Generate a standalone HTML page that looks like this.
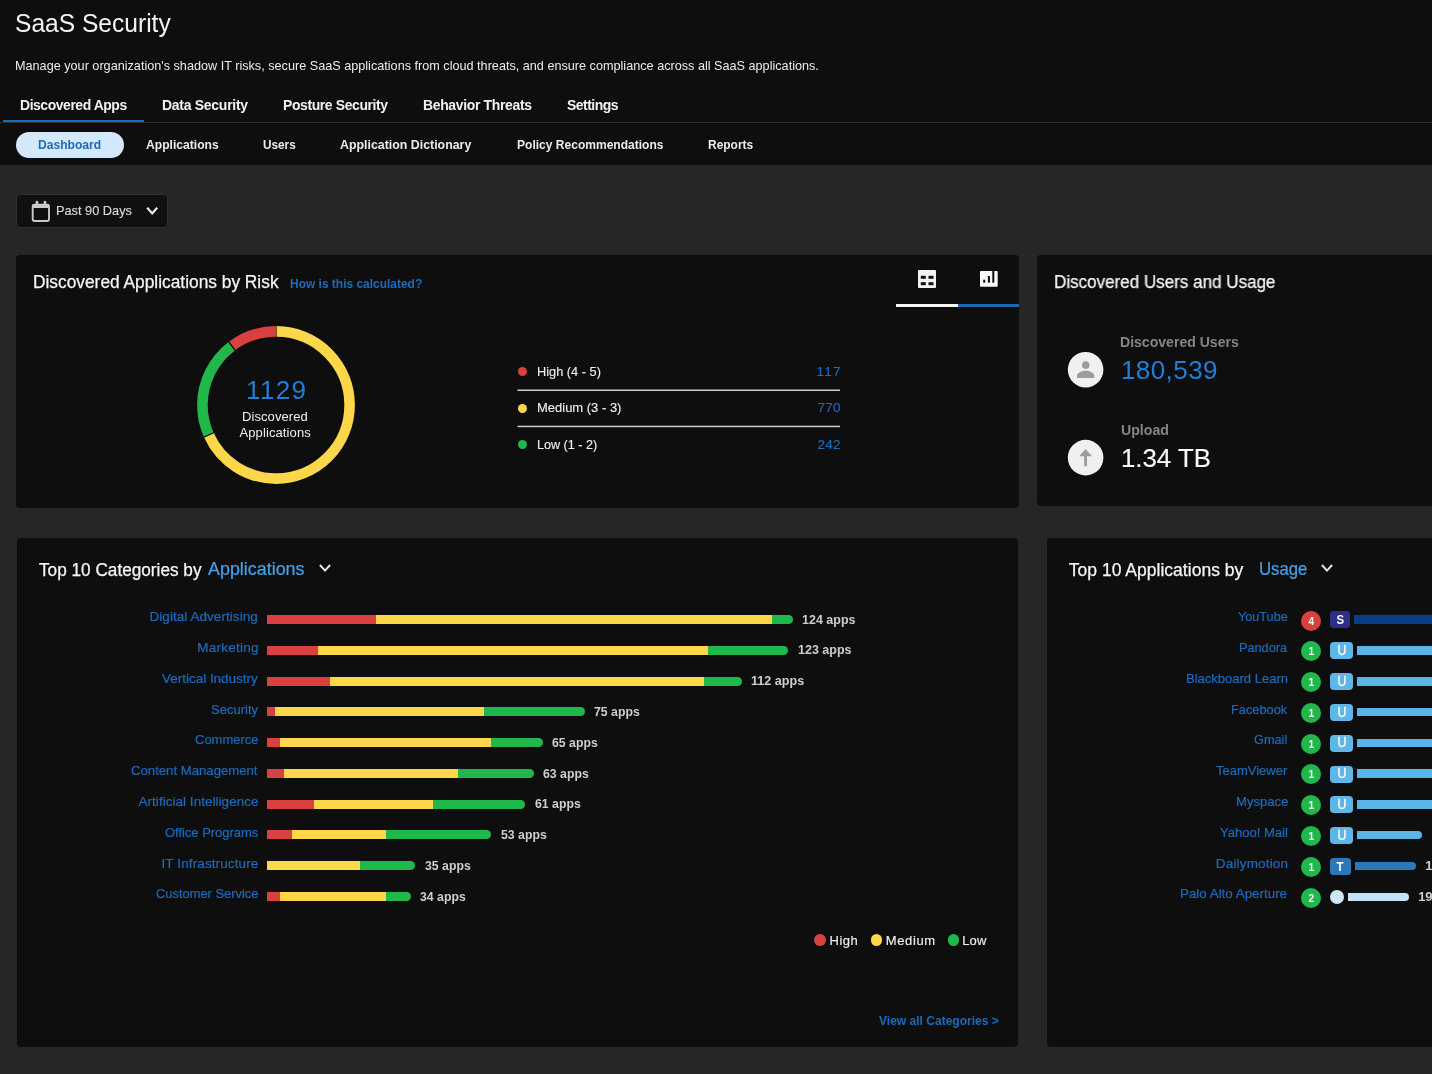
<!DOCTYPE html>
<html lang="en">
<head>
<meta charset="utf-8">
<title>SaaS Security</title>
<style>
html,body{margin:0;padding:0;}
body{width:1432px;height:1074px;overflow:hidden;background:#262626;font-family:"Liberation Sans",sans-serif;position:relative;}
#tx{position:absolute;left:0;top:0;width:1432px;height:1074px;overflow:hidden;will-change:transform;}
.a{position:absolute;}
.t{position:absolute;white-space:nowrap;margin:0;font-weight:400;text-decoration:none;}
.hdr{left:0;top:0;width:1432px;height:165px;background:#0e0e0e;}
.card{background:#0e0e0e;border-radius:4px;}
.seg{position:absolute;top:0;height:100%;}
.bar{position:absolute;height:9px;border-radius:0 4.5px 4.5px 0;overflow:hidden;}
.r{background:#d94141;}.y{background:#fdd749;}.g{background:#21b84b;}
.dot{position:absolute;border-radius:50%;}
.rc{position:absolute;width:20px;height:20px;border-radius:50%;color:#fff;font-size:11.5px;font-weight:700;line-height:20.6px;text-align:center;}
.sq{display:inline-block;transform:scaleX(.88);}
.bd{position:absolute;border-radius:3.5px;color:#fff;font-size:13px;font-weight:700;text-align:center;}
.ub{position:absolute;height:8.5px;border-radius:0 4.5px 4.5px 0;}
</style>
</head>
<body>
<div id="tx">

<header>
<div class="a hdr"></div>
<h1 class="t" style="left:15.05px;top:5.49px;font-size:26px;line-height:36px;color:#f4f4f4;transform:scaleX(0.9451);transform-origin:left center">SaaS Security</h1>
<p class="t" style="left:15.03px;top:56.50px;font-size:13px;line-height:18px;color:#ececec;transform:scaleX(0.9732);transform-origin:left center">Manage your organization's shadow IT risks, secure SaaS applications from cloud threats, and ensure compliance across all SaaS applications.</p>
<nav aria-label="Sections">
<div class="a" style="left:0;top:122px;width:1432px;height:1px;background:#2e2e2e"></div>
<div class="a" style="left:3px;top:120px;width:141px;height:2px;background:#1a69ba"></div>
<a class="t" href="#" style="left:19.60px;top:93.63px;font-size:15.5px;line-height:22px;color:#f2f2f2;letter-spacing:-0.496px;transform:scaleX(0.9000);transform-origin:left center;font-weight:700">Discovered Apps</a>
<a class="t" href="#" style="left:161.60px;top:93.63px;font-size:15.5px;line-height:22px;color:#f2f2f2;letter-spacing:-0.287px;transform:scaleX(0.9000);transform-origin:left center;font-weight:700">Data Security</a>
<a class="t" href="#" style="left:282.85px;top:93.63px;font-size:15.5px;line-height:22px;color:#f2f2f2;letter-spacing:-0.430px;transform:scaleX(0.9000);transform-origin:left center;font-weight:700">Posture Security</a>
<a class="t" href="#" style="left:423.35px;top:93.63px;font-size:15.5px;line-height:22px;color:#f2f2f2;letter-spacing:-0.371px;transform:scaleX(0.9000);transform-origin:left center;font-weight:700">Behavior Threats</a>
<a class="t" href="#" style="left:567.00px;top:93.63px;font-size:15.5px;line-height:22px;color:#f2f2f2;letter-spacing:-0.551px;transform:scaleX(0.9000);transform-origin:left center;font-weight:700">Settings</a>
</nav>
<nav aria-label="Discovered Apps">
<div class="a" style="left:15.5px;top:132px;width:108px;height:25.5px;border-radius:13px;background:#d3e8fa"></div>
<a class="t" href="#" style="left:38.00px;top:136.00px;font-size:13px;line-height:18px;color:#1c6bbe;transform:scaleX(0.9307);transform-origin:left center;font-weight:700">Dashboard</a>
<a class="t" href="#" style="left:145.75px;top:135.75px;font-size:13px;line-height:18px;color:#ececec;transform:scaleX(0.9322);transform-origin:left center;font-weight:700">Applications</a>
<a class="t" href="#" style="left:263.00px;top:135.75px;font-size:13px;line-height:18px;color:#ececec;transform:scaleX(0.9051);transform-origin:left center;font-weight:700">Users</a>
<a class="t" href="#" style="left:340.00px;top:135.75px;font-size:13px;line-height:18px;color:#ececec;transform:scaleX(0.9515);transform-origin:left center;font-weight:700">Application Dictionary</a>
<a class="t" href="#" style="left:517.00px;top:135.75px;font-size:13px;line-height:18px;color:#ececec;transform:scaleX(0.9258);transform-origin:left center;font-weight:700">Policy Recommendations</a>
<a class="t" href="#" style="left:708.25px;top:135.75px;font-size:13px;line-height:18px;color:#ececec;transform:scaleX(0.9205);transform-origin:left center;font-weight:700">Reports</a>
</nav>
</header>

<main>
<!-- time range picker -->
<div class="filter">
<div class="a" style="left:16px;top:194px;width:150px;height:32px;border:1px solid #303030;border-radius:4px;background:#101010"></div>
<svg class="a" style="left:30px;top:199px" width="22" height="25" viewBox="0 0 22 25">
 <rect x="2.7" y="5.8" width="16.3" height="16.2" rx="2" fill="none" stroke="#cacaca" stroke-width="1.9"/>
 <rect x="2.7" y="5" width="16.3" height="4" fill="#cacaca"/>
 <rect x="5.7" y="1.9" width="2.5" height="4" fill="#cacaca"/><rect x="13.7" y="1.9" width="2.5" height="4" fill="#cacaca"/>
</svg>
<span class="t" style="left:55.72px;top:201.90px;font-size:13px;line-height:18px;color:#d8d8d8;transform:scaleX(0.9816);transform-origin:left center;-webkit-text-stroke:0.15px #d8d8d8">Past 90 Days</span>
<svg class="a" style="left:144px;top:204px" width="16" height="14" viewBox="0 0 16 14"><path d="M3.2 3.8 L8.2 9.4 L13.2 3.8" fill="none" stroke="#ececec" stroke-width="2.2"/></svg>
</div>

<!-- card 1: discovered applications by risk -->
<section aria-label="Discovered Applications by Risk">
<div class="a card" style="left:16px;top:255px;width:1003px;height:252.5px"></div>
<svg class="a" style="left:918px;top:270px" width="18" height="18" viewBox="0 0 18 18"><rect width="18" height="18" rx="1" fill="#f2f2f2"/><g fill="#0e0e0e"><rect x="2.8" y="5.8" width="5" height="3"/><rect x="10.5" y="5.8" width="5" height="3"/><rect x="2.8" y="12.2" width="5" height="3"/><rect x="10.5" y="12.2" width="5" height="3"/></g></svg>
<svg class="a" style="left:979.8px;top:271.3px" width="18" height="16" viewBox="0 0 18 16"><rect width="17.7" height="15.8" rx="0.8" fill="#fafafa"/><g fill="#0e0e0e"><rect x="3.2" y="8.7" width="2" height="3"/><rect x="7.9" y="5" width="2" height="6.7"/><rect x="12.3" y="0" width="2" height="11.7"/></g></svg>
<div class="a" style="left:896px;top:304px;width:62px;height:3px;background:#f4f4f4"></div>
<div class="a" style="left:958px;top:304px;width:61px;height:3px;background:#1a69ba"></div>
<svg class="a" style="left:189.75px;top:318.75px" width="172" height="172" viewBox="-86 -86 172 172">
 <g fill="none" stroke-width="10.6" transform="rotate(-90)">
  <circle r="73.6" stroke="#fdd749" stroke-dasharray="314.09 462.44" stroke-dashoffset="-0.65"/>
  <circle r="73.6" stroke="#21b84b" stroke-dasharray="97.82 462.44" stroke-dashoffset="-316.04"/>
  <circle r="73.6" stroke="#d94141" stroke-dasharray="46.62 462.44" stroke-dashoffset="-415.17"/>
 </g>
</svg>
<div class="dot r" style="left:517.5px;top:367.2px;width:9px;height:9px"></div>
<div class="dot y" style="left:517.5px;top:403.5px;width:9px;height:9px"></div>
<div class="dot g" style="left:517.5px;top:440px;width:9px;height:9px"></div>
<svg class="a" style="left:517px;top:385px" width="324" height="46" viewBox="0 0 324 46"><rect x="0.5" y="4.5" width="322.5" height="1.5" fill="#cdcdcd"/><rect x="0.5" y="40.7" width="322.5" height="1.5" fill="#cdcdcd"/></svg>
<h2 class="t" style="left:33.01px;top:269.84px;font-size:17.5px;line-height:24px;color:#f6f6f6;transform:scaleX(0.9900);transform-origin:left center;-webkit-text-stroke:0.25px #f6f6f6">Discovered Applications by Risk</h2>
<a class="t" href="#" style="left:289.50px;top:274.50px;font-size:13px;line-height:18px;color:#1c6bbe;transform:scaleX(0.9196);transform-origin:left center;font-weight:700">How is this calculated?</a>
<span class="t" style="left:246.00px;top:372.24px;font-size:26px;line-height:36px;color:#1f7fd8;letter-spacing:1.350px">1129</span>
<span class="t" style="left:242.00px;top:408.00px;font-size:13px;line-height:18px;color:#f0f0f0;letter-spacing:0.078px">Discovered</span>
<span class="t" style="left:239.50px;top:424.00px;font-size:13px;line-height:18px;color:#f0f0f0;letter-spacing:0.105px">Applications</span>
<span class="t" style="left:536.55px;top:362.07px;font-size:13.5px;line-height:19px;color:#f0f0f0;transform:scaleX(0.9466);transform-origin:left center;-webkit-text-stroke:0.12px #f0f0f0">High (4 - 5)</span>
<a class="t" href="#" style="left:816.50px;top:362.07px;font-size:13.5px;line-height:19px;color:#1c6bbe;letter-spacing:1.243px;-webkit-text-stroke:0.15px #1c6bbe">117</a>
<span class="t" style="left:536.54px;top:398.32px;font-size:13.5px;line-height:19px;color:#f0f0f0;transform:scaleX(0.9620);transform-origin:left center;-webkit-text-stroke:0.12px #f0f0f0">Medium (3 - 3)</span>
<a class="t" href="#" style="left:817.50px;top:398.32px;font-size:13.5px;line-height:19px;color:#1c6bbe;letter-spacing:0.242px;-webkit-text-stroke:0.15px #1c6bbe">770</a>
<span class="t" style="left:536.57px;top:434.57px;font-size:13.5px;line-height:19px;color:#f0f0f0;transform:scaleX(0.9322);transform-origin:left center;-webkit-text-stroke:0.12px #f0f0f0">Low (1 - 2)</span>
<a class="t" href="#" style="left:817.50px;top:434.57px;font-size:13.5px;line-height:19px;color:#1c6bbe;letter-spacing:0.242px;-webkit-text-stroke:0.15px #1c6bbe">242</a>
</section>

<!-- card 2: discovered users and usage -->
<section aria-label="Discovered Users and Usage">
<div class="a card" style="left:1037px;top:255px;width:420px;height:250.5px"></div>
<svg class="a" style="left:1067px;top:351px" width="38" height="38" viewBox="0 0 38 38"><circle cx="18.6" cy="18.7" r="17.8" fill="#f0f0f0"/><circle cx="18.75" cy="14.1" r="3.8" fill="#9c9c9c"/><path d="M10 27 v-2.2 c0-3 4.5-5.1 8.7-5.1 s8.6 2.1 8.6 5.1 v2.2 z" fill="#9c9c9c"/></svg>
<svg class="a" style="left:1067px;top:439px" width="38" height="38" viewBox="0 0 38 38"><circle cx="18.6" cy="18.6" r="17.8" fill="#f0f0f0"/><path d="M18.6 10 L25.1 17.3 H20 V27.3 H17.2 V17.3 H12.1 Z" fill="#9c9c9c"/></svg>
<h2 class="t" style="left:1053.53px;top:269.84px;font-size:17.5px;line-height:24px;color:#f6f6f6;transform:scaleX(0.9729);transform-origin:left center;-webkit-text-stroke:0.25px #f6f6f6">Discovered Users and Usage</h2>
<span class="t" style="left:1119.56px;top:330.55px;font-size:15px;line-height:21px;color:#858585;transform:scaleX(0.9370);transform-origin:left center;font-weight:700">Discovered Users</span>
<a class="t" href="#" style="left:1121.00px;top:352.24px;font-size:26px;line-height:36px;color:#1f7fd8;letter-spacing:0.413px">180,539</a>
<span class="t" style="left:1120.50px;top:418.80px;font-size:15px;line-height:21px;color:#858585;transform:scaleX(0.9424);transform-origin:left center;font-weight:700">Upload</span>
<span class="t" style="left:1121.01px;top:439.99px;font-size:26px;line-height:36px;color:#fafafa;transform:scaleX(0.9920);transform-origin:left center;-webkit-text-stroke:0.15px #fafafa">1.34 TB</span>
</section>

<!-- card 3: top 10 categories -->
<section aria-label="Top 10 Categories">
<div class="a card" style="left:17px;top:538px;width:1001px;height:509px"></div>
<svg class="a" style="left:317px;top:561px" width="16" height="14" viewBox="0 0 16 14"><path d="M2.9 4 L8 9.6 L13.1 4" fill="none" stroke="#e4e4e4" stroke-width="2"/></svg>
<div class="bar" style="left:266.5px;top:615.00px;width:526.50px"><div class="seg r" style="left:0;width:109.75px"></div><div class="seg y" style="left:109.75px;width:395.75px"></div><div class="seg g" style="left:505.50px;width:21.00px"></div></div>
<div class="bar" style="left:266.5px;top:645.78px;width:521.75px"><div class="seg r" style="left:0;width:51.50px"></div><div class="seg y" style="left:51.50px;width:390.00px"></div><div class="seg g" style="left:441.50px;width:80.25px"></div></div>
<div class="bar" style="left:266.5px;top:676.56px;width:475.50px"><div class="seg r" style="left:0;width:63.50px"></div><div class="seg y" style="left:63.50px;width:373.75px"></div><div class="seg g" style="left:437.25px;width:38.25px"></div></div>
<div class="bar" style="left:266.5px;top:707.34px;width:318.25px"><div class="seg r" style="left:0;width:8.50px"></div><div class="seg y" style="left:8.50px;width:208.50px"></div><div class="seg g" style="left:217.00px;width:101.25px"></div></div>
<div class="bar" style="left:266.5px;top:738.12px;width:276.50px"><div class="seg r" style="left:0;width:13.00px"></div><div class="seg y" style="left:13.00px;width:211.75px"></div><div class="seg g" style="left:224.75px;width:51.75px"></div></div>
<div class="bar" style="left:266.5px;top:768.90px;width:267.50px"><div class="seg r" style="left:0;width:17.50px"></div><div class="seg y" style="left:17.50px;width:174.00px"></div><div class="seg g" style="left:191.50px;width:76.00px"></div></div>
<div class="bar" style="left:266.5px;top:799.68px;width:258.50px"><div class="seg r" style="left:0;width:47.00px"></div><div class="seg y" style="left:47.00px;width:119.00px"></div><div class="seg g" style="left:166.00px;width:92.50px"></div></div>
<div class="bar" style="left:266.5px;top:830.46px;width:224.50px"><div class="seg r" style="left:0;width:25.50px"></div><div class="seg y" style="left:25.50px;width:93.50px"></div><div class="seg g" style="left:119.00px;width:105.50px"></div></div>
<div class="bar" style="left:266.5px;top:861.24px;width:148.50px"><div class="seg y" style="left:0.00px;width:93.50px"></div><div class="seg g" style="left:93.50px;width:55.00px"></div></div>
<div class="bar" style="left:266.5px;top:892.02px;width:144.00px"><div class="seg r" style="left:0;width:13.00px"></div><div class="seg y" style="left:13.00px;width:106.00px"></div><div class="seg g" style="left:119.00px;width:25.00px"></div></div>
<div class="dot r" style="left:814.3px;top:933.9px;width:11.9px;height:11.9px"></div>
<div class="dot y" style="left:870.5px;top:933.9px;width:11.9px;height:11.9px"></div>
<div class="dot g" style="left:947.5px;top:933.9px;width:11.9px;height:11.9px"></div>
<h2 class="t" style="left:39.25px;top:557.54px;font-size:17.5px;line-height:24px;color:#f6f6f6;transform:scaleX(0.9826);transform-origin:left center;-webkit-text-stroke:0.25px #f6f6f6">Top 10 Categories by</h2>
<span class="t" style="left:208.00px;top:555.99px;font-size:18.5px;line-height:26px;color:#44a2ee;transform:scaleX(0.9673);transform-origin:left center;-webkit-text-stroke:0.2px #44a2ee">Applications</span>
<a class="t" href="#" style="left:149.50px;top:607.32px;font-size:13.5px;line-height:19px;color:#1c6bbe;letter-spacing:0.053px;-webkit-text-stroke:0.2px #1c6bbe">Digital Advertising</a>
<span class="t" style="left:801.75px;top:610.70px;font-size:13px;line-height:18px;color:#cecece;transform:scaleX(0.9610);transform-origin:left center;font-weight:700">124 apps</span>
<a class="t" href="#" style="left:197.25px;top:638.10px;font-size:13.5px;line-height:19px;color:#1c6bbe;letter-spacing:0.248px;-webkit-text-stroke:0.2px #1c6bbe">Marketing</a>
<span class="t" style="left:797.50px;top:641.48px;font-size:13px;line-height:18px;color:#cecece;transform:scaleX(0.9610);transform-origin:left center;font-weight:700">123 apps</span>
<a class="t" href="#" style="left:162.00px;top:668.88px;font-size:13.5px;line-height:19px;color:#1c6bbe;transform:scaleX(0.9970);transform-origin:left center;-webkit-text-stroke:0.2px #1c6bbe">Vertical Industry</a>
<span class="t" style="left:751.25px;top:672.26px;font-size:13px;line-height:18px;color:#cecece;transform:scaleX(0.9690);transform-origin:left center;font-weight:700">112 apps</span>
<a class="t" href="#" style="left:210.75px;top:699.66px;font-size:13.5px;line-height:19px;color:#1c6bbe;transform:scaleX(0.9640);transform-origin:left center;-webkit-text-stroke:0.2px #1c6bbe">Security</a>
<span class="t" style="left:594.25px;top:703.04px;font-size:13px;line-height:18px;color:#cecece;transform:scaleX(0.9443);transform-origin:left center;font-weight:700">75 apps</span>
<a class="t" href="#" style="left:195.00px;top:730.44px;font-size:13.5px;line-height:19px;color:#1c6bbe;transform:scaleX(0.9618);transform-origin:left center;-webkit-text-stroke:0.2px #1c6bbe">Commerce</a>
<span class="t" style="left:551.75px;top:733.82px;font-size:13px;line-height:18px;color:#cecece;transform:scaleX(0.9443);transform-origin:left center;font-weight:700">65 apps</span>
<a class="t" href="#" style="left:131.25px;top:761.22px;font-size:13.5px;line-height:19px;color:#1c6bbe;transform:scaleX(0.9744);transform-origin:left center;-webkit-text-stroke:0.2px #1c6bbe">Content Management</a>
<span class="t" style="left:543.00px;top:764.60px;font-size:13px;line-height:18px;color:#cecece;transform:scaleX(0.9443);transform-origin:left center;font-weight:700">63 apps</span>
<a class="t" href="#" style="left:138.50px;top:792.00px;font-size:13.5px;line-height:19px;color:#1c6bbe;letter-spacing:0.032px;-webkit-text-stroke:0.2px #1c6bbe">Artificial Intelligence</a>
<span class="t" style="left:534.75px;top:795.38px;font-size:13px;line-height:18px;color:#cecece;transform:scaleX(0.9443);transform-origin:left center;font-weight:700">61 apps</span>
<a class="t" href="#" style="left:164.50px;top:822.78px;font-size:13.5px;line-height:19px;color:#1c6bbe;transform:scaleX(0.9587);transform-origin:left center;-webkit-text-stroke:0.2px #1c6bbe">Office Programs</a>
<span class="t" style="left:501.00px;top:826.16px;font-size:13px;line-height:18px;color:#cecece;transform:scaleX(0.9443);transform-origin:left center;font-weight:700">53 apps</span>
<a class="t" href="#" style="left:161.50px;top:853.56px;font-size:13.5px;line-height:19px;color:#1c6bbe;letter-spacing:0.108px;-webkit-text-stroke:0.2px #1c6bbe">IT Infrastructure</a>
<span class="t" style="left:424.50px;top:856.94px;font-size:13px;line-height:18px;color:#cecece;transform:scaleX(0.9443);transform-origin:left center;font-weight:700">35 apps</span>
<a class="t" href="#" style="left:156.00px;top:884.34px;font-size:13.5px;line-height:19px;color:#1c6bbe;transform:scaleX(0.9553);transform-origin:left center;-webkit-text-stroke:0.2px #1c6bbe">Customer Service</a>
<span class="t" style="left:420.00px;top:887.72px;font-size:13px;line-height:18px;color:#cecece;transform:scaleX(0.9443);transform-origin:left center;font-weight:700">34 apps</span>
<span class="t" style="left:829.50px;top:931.50px;font-size:13px;line-height:18px;color:#f0f0f0;letter-spacing:0.498px;-webkit-text-stroke:0.15px #f0f0f0">High</span>
<span class="t" style="left:885.75px;top:931.50px;font-size:13px;line-height:18px;color:#f0f0f0;letter-spacing:0.619px;-webkit-text-stroke:0.15px #f0f0f0">Medium</span>
<span class="t" style="left:962.25px;top:931.50px;font-size:13px;line-height:18px;color:#f0f0f0;letter-spacing:0.145px;-webkit-text-stroke:0.15px #f0f0f0">Low</span>
<a class="t" href="#" style="left:879.25px;top:1011.70px;font-size:13px;line-height:18px;color:#1c6bbe;transform:scaleX(0.9259);transform-origin:left center;font-weight:700">View all Categories &gt;</a>
</section>

<!-- card 4: top 10 applications -->
<section aria-label="Top 10 Applications">
<div class="a card" style="left:1047px;top:538px;width:420px;height:509px"></div>
<svg class="a" style="left:1318.6px;top:561px" width="16" height="14" viewBox="0 0 16 14"><path d="M2.9 4 L8 9.6 L13.1 4" fill="none" stroke="#e4e4e4" stroke-width="2"/></svg>
<div class="rc" style="left:1301.25px;top:610.50px;background:#d94141"><span class="sq">4</span></div>
<div class="bd" style="left:1330px;top:610.50px;width:20px;height:17.5px;line-height:17.5px;background:#2d2f86"><span class="sq">S</span></div>
<div class="ub" style="left:1354.25px;top:614.60px;width:120px;height:9.2px;background:#093e84"></div>
<div class="rc" style="left:1301.25px;top:641.28px;background:#21b84b"><span class="sq">1</span></div>
<div class="bd" style="left:1330px;top:642.38px;width:23.2px;height:17px;line-height:17px;background:#5fb6e8;font-weight:400;font-size:14px;-webkit-text-stroke:0.3px #fff;border-radius:4px"><span class="sq" style="position:relative;top:-0.4px">U</span></div>
<div class="ub" style="left:1357.4px;top:646.28px;width:122.60px;background:#5ab4e8"></div>
<div class="rc" style="left:1301.25px;top:672.06px;background:#21b84b"><span class="sq">1</span></div>
<div class="bd" style="left:1330px;top:673.16px;width:23.2px;height:17px;line-height:17px;background:#5fb6e8;font-weight:400;font-size:14px;-webkit-text-stroke:0.3px #fff;border-radius:4px"><span class="sq" style="position:relative;top:-0.4px">U</span></div>
<div class="ub" style="left:1357.4px;top:677.06px;width:122.60px;background:#5ab4e8"></div>
<div class="rc" style="left:1301.25px;top:702.84px;background:#21b84b"><span class="sq">1</span></div>
<div class="bd" style="left:1330px;top:703.94px;width:23.2px;height:17px;line-height:17px;background:#5fb6e8;font-weight:400;font-size:14px;-webkit-text-stroke:0.3px #fff;border-radius:4px"><span class="sq" style="position:relative;top:-0.4px">U</span></div>
<div class="ub" style="left:1357.4px;top:707.84px;width:122.60px;background:#5ab4e8"></div>
<div class="rc" style="left:1301.25px;top:733.62px;background:#21b84b"><span class="sq">1</span></div>
<div class="bd" style="left:1330px;top:734.72px;width:23.2px;height:17px;line-height:17px;background:#5fb6e8;font-weight:400;font-size:14px;-webkit-text-stroke:0.3px #fff;border-radius:4px"><span class="sq" style="position:relative;top:-0.4px">U</span></div>
<div class="ub" style="left:1357.4px;top:738.62px;width:122.60px;background:#5ab4e8"></div>
<div class="rc" style="left:1301.25px;top:764.40px;background:#21b84b"><span class="sq">1</span></div>
<div class="bd" style="left:1330px;top:765.50px;width:23.2px;height:17px;line-height:17px;background:#5fb6e8;font-weight:400;font-size:14px;-webkit-text-stroke:0.3px #fff;border-radius:4px"><span class="sq" style="position:relative;top:-0.4px">U</span></div>
<div class="ub" style="left:1357.4px;top:769.40px;width:122.60px;background:#5ab4e8"></div>
<div class="rc" style="left:1301.25px;top:795.18px;background:#21b84b"><span class="sq">1</span></div>
<div class="bd" style="left:1330px;top:796.28px;width:23.2px;height:17px;line-height:17px;background:#5fb6e8;font-weight:400;font-size:14px;-webkit-text-stroke:0.3px #fff;border-radius:4px"><span class="sq" style="position:relative;top:-0.4px">U</span></div>
<div class="ub" style="left:1357.4px;top:800.18px;width:122.60px;background:#5ab4e8"></div>
<div class="rc" style="left:1301.25px;top:825.96px;background:#21b84b"><span class="sq">1</span></div>
<div class="bd" style="left:1330px;top:827.06px;width:23.2px;height:17px;line-height:17px;background:#5fb6e8;font-weight:400;font-size:14px;-webkit-text-stroke:0.3px #fff;border-radius:4px"><span class="sq" style="position:relative;top:-0.4px">U</span></div>
<div class="ub" style="left:1357.4px;top:830.96px;width:64.80px;background:#5ab4e8"></div>
<div class="rc" style="left:1301.25px;top:856.74px;background:#21b84b"><span class="sq">1</span></div>
<div class="bd" style="left:1330px;top:857.84px;width:20.8px;height:17px;line-height:17px;background:#2a7abb"><span class="sq">T</span></div>
<div class="ub" style="left:1355.4px;top:861.74px;width:60.40px;background:#2a7abb"></div>
<div class="rc" style="left:1301.25px;top:887.52px;background:#21b84b"><span class="sq">2</span></div>
<div class="dot" style="left:1329.6px;top:889.87px;width:14.5px;height:14.5px;background:#cfe6f8"></div>
<div class="ub" style="left:1348px;top:892.52px;width:61.00px;background:#c4e2f8"></div>
<h2 class="t" style="left:1068.75px;top:557.54px;font-size:17.5px;line-height:24px;color:#f6f6f6;letter-spacing:0.019px;-webkit-text-stroke:0.25px #f6f6f6">Top 10 Applications by</h2>
<span class="t" style="left:1258.59px;top:555.99px;font-size:18.5px;line-height:26px;color:#44a2ee;transform:scaleX(0.9054);transform-origin:left center;-webkit-text-stroke:0.2px #44a2ee">Usage</span>
<a class="t" href="#" style="left:1238.25px;top:607.32px;font-size:13.5px;line-height:19px;color:#1c6bbe;transform:scaleX(0.9373);transform-origin:left center;-webkit-text-stroke:0.2px #1c6bbe">YouTube</a>
<a class="t" href="#" style="left:1239.06px;top:638.10px;font-size:13.5px;line-height:19px;color:#1c6bbe;transform:scaleX(0.9400);transform-origin:left center;-webkit-text-stroke:0.2px #1c6bbe">Pandora</a>
<a class="t" href="#" style="left:1186.04px;top:668.88px;font-size:13.5px;line-height:19px;color:#1c6bbe;transform:scaleX(0.9635);transform-origin:left center;-webkit-text-stroke:0.2px #1c6bbe">Blackboard Learn</a>
<a class="t" href="#" style="left:1231.05px;top:699.66px;font-size:13.5px;line-height:19px;color:#1c6bbe;transform:scaleX(0.9481);transform-origin:left center;-webkit-text-stroke:0.2px #1c6bbe">Facebook</a>
<a class="t" href="#" style="left:1254.25px;top:730.44px;font-size:13.5px;line-height:19px;color:#1c6bbe;transform:scaleX(0.9432);transform-origin:left center;-webkit-text-stroke:0.2px #1c6bbe">Gmail</a>
<a class="t" href="#" style="left:1215.75px;top:761.22px;font-size:13.5px;line-height:19px;color:#1c6bbe;transform:scaleX(0.9626);transform-origin:left center;-webkit-text-stroke:0.2px #1c6bbe">TeamViewer</a>
<a class="t" href="#" style="left:1235.53px;top:792.00px;font-size:13.5px;line-height:19px;color:#1c6bbe;transform:scaleX(0.9712);transform-origin:left center;-webkit-text-stroke:0.2px #1c6bbe">Myspace</a>
<a class="t" href="#" style="left:1219.60px;top:822.78px;font-size:13.5px;line-height:19px;color:#1c6bbe;transform:scaleX(0.9660);transform-origin:left center;-webkit-text-stroke:0.2px #1c6bbe">Yahoo! Mail</a>
<a class="t" href="#" style="left:1215.80px;top:853.56px;font-size:13.5px;line-height:19px;color:#1c6bbe;letter-spacing:0.168px;-webkit-text-stroke:0.2px #1c6bbe">Dailymotion</a>
<a class="t" href="#" style="left:1179.51px;top:884.34px;font-size:13.5px;line-height:19px;color:#1c6bbe;transform:scaleX(0.9902);transform-origin:left center;-webkit-text-stroke:0.2px #1c6bbe">Palo Alto Aperture</a>
<span class="t" style="left:1431.40px;top:826.16px;font-size:13px;line-height:18px;color:#cecece;letter-spacing:-0.200px;font-weight:700">21.6 GB</span>
<span class="t" style="left:1425.20px;top:856.94px;font-size:13px;line-height:18px;color:#cecece;letter-spacing:-0.200px;font-weight:700">19.9 GB</span>
<span class="t" style="left:1418.20px;top:887.72px;font-size:13px;line-height:18px;color:#cecece;letter-spacing:-0.200px;font-weight:700">19.2 GB</span>
</section>
</main>

</div>
</body>
</html>
